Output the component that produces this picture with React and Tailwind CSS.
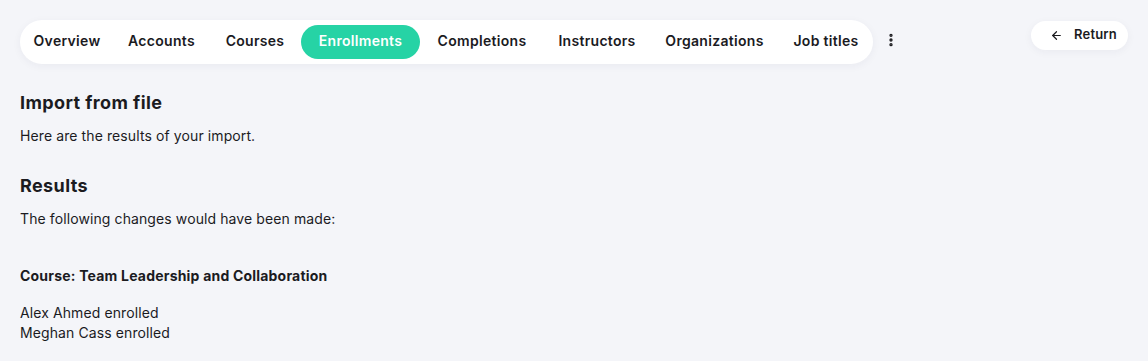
import { ArrowLeft, EllipsisVertical } from 'lucide-react'

const TABS = [
  { label: 'Overview',      w: 'w-[94px]' },
  { label: 'Accounts',      w: 'w-[95px]' },
  { label: 'Courses',       w: 'w-[92px]' },
  { label: 'Enrollments',   w: 'w-[119px]', active: true },
  { label: 'Completions',   w: 'w-[124px]' },
  { label: 'Instructors',   w: 'w-[106px]' },
  { label: 'Organizations', w: 'w-[129px]' },
  { label: 'Job titles',    w: 'w-[94px]' },
]

export default function App() {
  return (
    <div className="min-h-[361px] bg-[#f4f5f9] px-5 pt-5 text-[#1b1b1f]" style={{ fontFamily: 'Inter, "Noto Sans", sans-serif' }}>
      <div className="flex items-start">
        <nav className="flex items-center rounded-full bg-white py-[5px] shadow-[0_2px_8px_rgba(30,40,80,0.05)]">
          {TABS.map(({ label, w, active }) => (
            <span
              key={label}
              className={`${w} flex h-[34px] items-center justify-center rounded-full pb-[3px] text-[14px] font-semibold tracking-[0.3px] ${
                active ? 'bg-[#26d3a5] text-white' : 'text-[#1b1b1f]'
              }`}
            >
              {label}
            </span>
          ))}
        </nav>
        <div className="ml-[8px] mt-[10px] flex h-5 w-5 items-center justify-center">
          <EllipsisVertical size={16} strokeWidth={3} />
        </div>
        <button className="ml-auto mt-px flex h-[29px] w-[97px] items-center gap-[11px] rounded-full bg-white pb-px pl-[19px] text-[13px] font-semibold tracking-[0.2px] shadow-[0_2px_8px_rgba(30,40,80,0.05)]">
          <ArrowLeft size={13} strokeWidth={2.2} />
          Return
        </button>
      </div>

      <h1 className="mt-[25px] text-[18px] font-bold leading-[28px] tracking-[0.4px]">Import from file</h1>
      <p className="mt-[9px] text-[14px] leading-[20px] tracking-[0.1px]">Here are the results of your import.</p>

      <h2 className="mt-[26px] text-[18px] font-bold leading-[28px] tracking-[0.4px]">Results</h2>
      <p className="mt-[9px] text-[14px] leading-[20px] tracking-[0.1px]">The following changes would have been made:</p>

      <p className="mt-[37px] text-[14px] font-bold leading-[20px] tracking-[0.2px]">Course: Team Leadership and Collaboration</p>
      <div className="mt-[17px] text-[14px] leading-[19.5px] tracking-[0.1px]">
        <p>Alex Ahmed enrolled</p>
        <p>Meghan Cass enrolled</p>
      </div>
    </div>
  )
}
